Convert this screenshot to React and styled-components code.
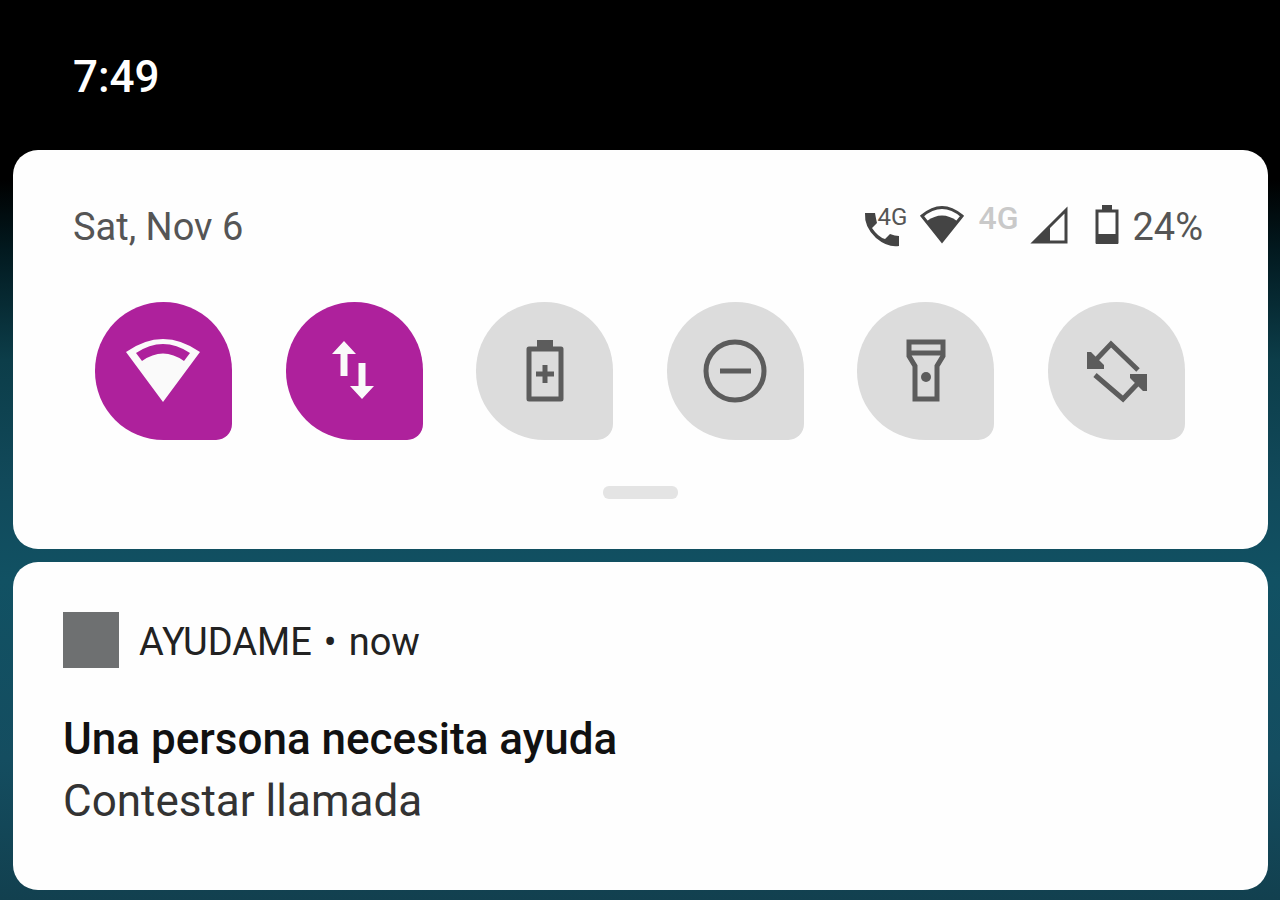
import React from "react";
import styled, { createGlobalStyle } from "styled-components";

const GlobalStyle = createGlobalStyle`
  * {
    box-sizing: border-box;
  }
  body {
    margin: 0;
    font-family: Roboto, "Liberation Sans", sans-serif;
    background: #000;
  }
`;

const Screen = styled.div`
  min-height: 100vh;
  display: flex;
  flex-direction: column;
  padding: 0 12px 10px 13px;
  background: linear-gradient(
    180deg,
    #000 180px,
    #02191f 250px,
    #0c3d49 360px,
    #11495a 480px,
    #115163 580px,
    #144d60 760px,
    #12404f 100%
  );
`;
const StatusBar = styled.header`
  height: 150px;
  padding: 50px 60px 0;
  color: #fff;
  font-size: 44px;
  line-height: 54px;
  font-weight: 500;
`;
const Card = styled.section`
  background: #fefefe;
  border-radius: 25px;
`;
const QuickSettings = styled(Card)`
  padding: 50px 65px;
  margin-bottom: 13px;
`;
const InfoRow = styled.div`
  display: flex;
  justify-content: space-between;
  height: 52px;
  margin-left: -5px;
  font-size: 38px;
  line-height: 54px;
  color: #555;
`;
const StatusIcons = styled.div`
  display: flex;
  gap: 12px;
  & svg {
    display: block;
    margin-top: 5px;
  }
`;
const CallStatus = styled.div`
  position: relative;
`;
const CallLabel = styled.span`
  position: absolute;
  top: 5px;
  right: 0;
  font-size: 24px;
  line-height: 24px;
`;
const DataLabel = styled.span`
  width: 42px;
  display: flex;
  justify-content: flex-end;
  font-size: 32px;
  line-height: 36px;
  font-weight: 500;
  color: #c9c9c9;
`;
const Tiles = styled.div`
  display: flex;
  justify-content: space-between;
  margin: 50px 18px 0 17px;
`;
const Tile = styled.button`
  width: 137px;
  height: 138px;
  display: flex;
  align-items: center;
  justify-content: center;
  padding: 0;
  border: none;
  border-radius: 69px 69px 16px 69px;
  background: ${({ $active }) => ($active ? "#ae219c" : "#dcdcdc")};
  color: ${({ $active }) => ($active ? "#fafafa" : "#5c5c5c")};
  cursor: pointer;
`;
const Handle = styled.div`
  width: 75px;
  height: 13px;
  margin: 46px auto 0;
  border-radius: 6px;
  background: #e4e4e4;
`;
const Notification = styled(Card)`
  flex: 1;
  padding: 50px;
`;
const AppRow = styled.div`
  display: flex;
  gap: 12px;
  height: 56px;
  font-size: 38px;
  line-height: 60px;
  color: #222;
`;
const AppIcon = styled.span`
  width: 56px;
  height: 56px;
  margin-right: 8px;
  background: #6e7071;
`;
const Title = styled.h1`
  margin: 40px 0 0;
  font-size: 44px;
  line-height: 62px;
  font-weight: 500;
  color: #111;
`;
const Message = styled.p`
  margin: 0;
  font-size: 44px;
  line-height: 62px;
  color: #333;
`;

const PhoneIcon = () => (
  <svg width="43" height="43" viewBox="0 0 43 43" fill="#444">
    <path d="M1 8H11Q12 14 13 18L8 23Q14 32 21 34L26 29Q31 31 35 31V41Q24 43 12 33Q0 22 1 8Z" />
  </svg>
);
const WifiStatusIcon = () => (
  <svg width="45" height="40" viewBox="0 0 45 40">
    <path d="M3 11Q23 -6 43 11L23 36Z" fill="none" stroke="#444" strokeWidth="3" />
    <path d="M8 16Q23 5 38 16L23 37Z" fill="#444" />
  </svg>
);
const SignalIcon = () => (
  <svg width="38" height="40" viewBox="0 0 38 40">
    <path d="M4 37L36 5V37Z" fill="none" stroke="#444" strokeWidth="3" />
    <path d="M2 38L20 20V38Z" fill="#444" />
  </svg>
);
const BatteryIcon = () => (
  <svg width="40" height="40" viewBox="0 0 40 40">
    <path d="M17 6H37V37H17Z" fill="none" stroke="#444" strokeWidth="3" />
    <path d="M22 0H32V6H22ZM16 29H38V39H16Z" fill="#444" />
  </svg>
);
const WifiIcon = () => (
  <svg width="76" height="76" viewBox="0 0 76 76">
    <path
      fill="currentColor"
      fillRule="evenodd"
      d="M0 19Q37 -7 74 19L37 69ZM10 20L16 28Q37 13 58 28L64 20Q37 2 10 20Z"
    />
  </svg>
);
const DataIcon = () => (
  <svg width="76" height="76" viewBox="0 0 76 76" fill="none" stroke="currentColor" strokeWidth="7">
    <path d="M28 43V16M46 30V58" />
    <path d="M28 8L40 21H16ZM46 66L58 53H34Z" fill="currentColor" stroke="none" />
  </svg>
);
const SaverIcon = () => (
  <svg width="76" height="76" viewBox="0 0 76 76" fill="none" stroke="currentColor" strokeWidth="5">
    <path d="M22 16H54V66H22Z" strokeLinejoin="round" />
    <path d="M38 32V50M29 41H47" />
    <path d="M30 7H46V16H30Z" fill="currentColor" stroke="none" />
  </svg>
);
const DndIcon = () => (
  <svg width="76" height="76" viewBox="0 0 76 76" fill="none" stroke="currentColor" strokeWidth="5">
    <circle cx="38" cy="38" r="29" />
    <path d="M23 38H54" />
  </svg>
);
const TorchIcon = () => (
  <svg width="76" height="76" viewBox="0 0 76 76" fill="none" stroke="currentColor" strokeWidth="5">
    <path d="M21 9H55V23L49 33V66H27V33L21 23ZM21 20H55" />
    <circle cx="38" cy="44" r="5" fill="currentColor" stroke="none" />
  </svg>
);
const RotateIcon = () => (
  <svg width="76" height="76" viewBox="0 0 76 76" fill="none" stroke="currentColor" strokeWidth="5">
    <path d="M14 31L33 11L60 37M17 42L45 66L64 46" />
    <path d="M9 19H13L26 32V36H9ZM69 58H65L52 45V41H69Z" fill="currentColor" stroke="none" />
  </svg>
);

const tiles = [
  { name: "Wi-Fi", Icon: WifiIcon, active: true },
  { name: "Mobile data", Icon: DataIcon, active: true },
  { name: "Battery Saver", Icon: SaverIcon },
  { name: "Do Not Disturb", Icon: DndIcon },
  { name: "Flashlight", Icon: TorchIcon },
  { name: "Auto-rotate", Icon: RotateIcon },
];

function App() {
  return (
    <Screen>
      <GlobalStyle />
      <StatusBar>7:49</StatusBar>
      <QuickSettings>
        <InfoRow>
          <span>Sat, Nov 6</span>
          <StatusIcons>
            <CallStatus>
              <PhoneIcon />
              <CallLabel>4G</CallLabel>
            </CallStatus>
            <WifiStatusIcon />
            <DataLabel>4G</DataLabel>
            <SignalIcon />
            <BatteryIcon />
            <span>24%</span>
          </StatusIcons>
        </InfoRow>
        <Tiles>
          {tiles.map(({ name, Icon, active }) => (
            <Tile key={name} $active={active} aria-label={name} aria-pressed={!!active}>
              <Icon />
            </Tile>
          ))}
        </Tiles>
        <Handle />
      </QuickSettings>
      <Notification>
        <AppRow>
          <AppIcon />
          <span>AYUDAME</span>
          <span>•</span>
          <span>now</span>
        </AppRow>
        <Title>Una persona necesita ayuda</Title>
        <Message>Contestar llamada</Message>
      </Notification>
    </Screen>
  );
}

export default App;
